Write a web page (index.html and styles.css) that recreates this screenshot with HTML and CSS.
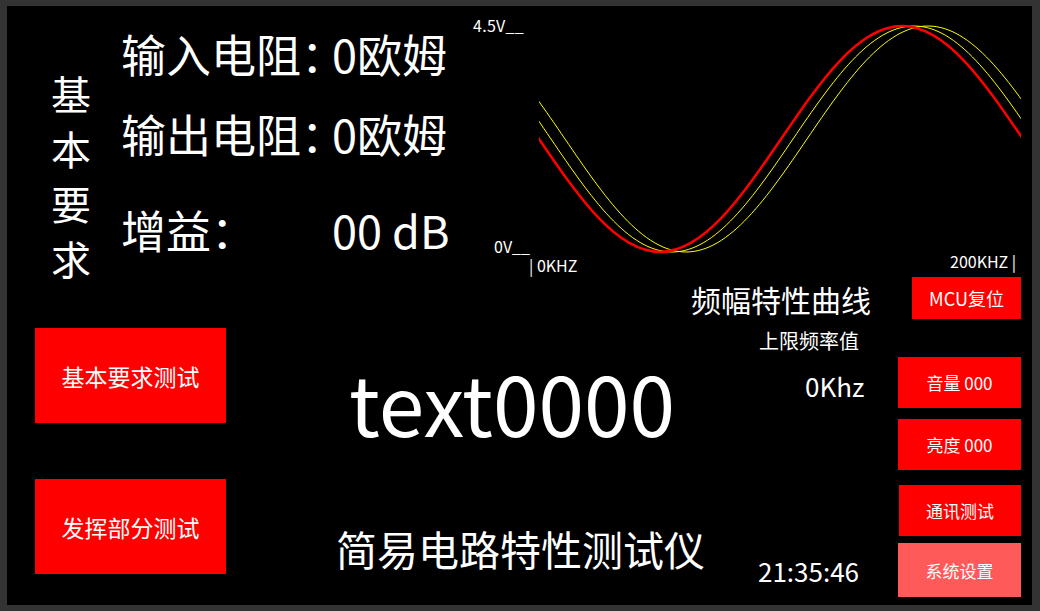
FILE: index.html
```html
<!DOCTYPE html>
<html lang="zh-CN">
<head>
<meta charset="utf-8">
<title>简易电路特性测试仪</title>
<link rel="stylesheet" href="styles.css">
</head>
<body>
<div class="screen">
  <div class="top">
    <div class="vert">基本要求</div>
    <div class="readings">
      <div class="row r1"><span class="label">输入电阻<span class="colon">：</span></span><span class="value">0欧姆</span></div>
      <div class="row r2"><span class="label">输出电阻<span class="colon">：</span></span><span class="value">0欧姆</span></div>
      <div class="row r3"><span class="label">增益<span class="colon">：</span></span><span class="value">00 dB</span></div>
    </div>
    <div class="chart">
      <span class="axis ymax">4.5V__</span>
      <span class="axis ymin">0V__</span>
      <span class="axis xmin">| 0KHZ</span>
      <span class="axis xmax">200KHZ |</span>
      <svg class="plot" width="482" height="269" viewBox="0 0 482 269">
        <defs>
          <path id="wave" d="M-121,20 C-77.21,20 -39.46,75.1 0,133 C39.46,190.9 77.21,246 121,246 C164.79,246 202.54,190.9 242,133 C281.46,75.1 319.21,20 363,20 C406.79,20 444.54,75.1 484,133"/>
        </defs>
        <use href="#wave" class="yl" transform="translate(26,0)"/>
        <use href="#wave" class="yl" transform="translate(12,0)"/>
        <use href="#wave" class="rd"/>
      </svg>
    </div>
  </div>
  <div class="bottom">
    <div class="col-a">
      <div class="btn big b1">基本要求测试</div>
      <div class="btn big b2">发挥部分测试</div>
    </div>
    <div class="col-b">
      <div class="bigtext">text0000</div>
      <div class="title">简易电路特性测试仪</div>
    </div>
    <div class="col-c">
      <div class="curve-title">频幅特性曲线</div>
      <div class="limit-label">上限频率值</div>
      <div class="limit-value">0Khz</div>
      <div class="clock">21:35:46</div>
    </div>
    <div class="col-d">
      <div class="btn small mcu">MCU复位</div>
      <div class="btn small vol">音量 000</div>
      <div class="btn small bright">亮度 000</div>
      <div class="btn small comm">通讯测试</div>
      <div class="btn small sys">系统设置</div>
    </div>
  </div>
</div>
</body>
</html>
```
FILE: styles.css
```css
html, body {
  margin: 0;
  padding: 0;
  background: #333333;
}
body {
  width: 1040px;
  height: 611px;
  overflow: hidden;
  font-family: "Noto Sans CJK SC", "Microsoft YaHei", sans-serif;
  color: #ffffff;
}
.screen {
  margin: 6px 8px 6px 7px;
  width: 1025px;
  height: 599px;
  background: #000000;
  display: flex;
  flex-direction: column;
}
.top {
  height: 269px;
  display: grid;
  grid-template-columns: 114px 349px 1fr;
}
.vert {
  padding-left: 44px;
  padding-top: 60px;
  width: 40px;
  font-size: 40px;
  line-height: 55px;
}
.readings {
  padding-top: 25px;
}
.row {
  display: grid;
  grid-template-columns: 211px auto;
  height: 45px;
  font-size: 45px;
  line-height: 45px;
  white-space: nowrap;
}
.colon {
  letter-spacing: -0.5em;
}
.r2 { margin-top: 35px; }
.r3 { margin-top: 51px; }
.chart {
  position: relative;
  height: 269px;
}
.axis {
  position: absolute;
  font-size: 16px;
  line-height: 16px;
  white-space: nowrap;
}
.ymax { left: 3px; top: 11px; letter-spacing: 0.3px; }
.ymin { left: 24px; top: 232px; }
.xmin { left: 59px; top: 251px; }
.xmax { left: 480px; top: 247px; }
.plot {
  position: absolute;
  left: 69px;
  top: 0;
  overflow: hidden;
}
.plot .rd {
  fill: none;
  stroke: #ff0000;
  stroke-width: 2.5;
}
.plot .yl {
  fill: none;
  stroke: #ffff00;
  stroke-width: 1;
}
.bottom {
  height: 330px;
  display: grid;
  grid-template-columns: 253px 420px 215px 137px;
}
.btn {
  background: #ff0000;
  color: #ffffff;
  display: flex;
  align-items: center;
  justify-content: center;
  white-space: nowrap;
}
.col-a {
  padding-left: 28px;
  display: flex;
  flex-direction: column;
}
.big {
  width: 191px;
  height: 95px;
  font-size: 23px;
}
.b1 { margin-top: 53px; }
.b2 { margin-top: 56px; }
.col-b {
  display: flex;
  flex-direction: column;
  white-space: nowrap;
}
.bigtext {
  margin-top: 86px;
  margin-left: 89px;
  font-size: 82px;
  line-height: 82px;
}
.title {
  margin-top: 85px;
  margin-left: 76px;
  font-size: 41px;
  line-height: 41px;
}
.col-c {
  display: flex;
  flex-direction: column;
  white-space: nowrap;
}
.curve-title {
  margin-top: 9px;
  margin-left: 11px;
  font-size: 30px;
  line-height: 30px;
}
.limit-label {
  margin-top: 17px;
  margin-left: 79px;
  font-size: 20px;
  line-height: 20px;
}
.limit-value {
  margin-top: 22px;
  margin-left: 125px;
  font-size: 26px;
  line-height: 26px;
}
.clock {
  margin-top: 159px;
  margin-left: 78px;
  font-size: 26px;
  line-height: 26px;
}
.col-d {
  display: flex;
  flex-direction: column;
  align-items: flex-end;
  padding-right: 11px;
}
.small {
  width: 123px;
  height: 51px;
  font-size: 17px;
}
.mcu { margin-top: 2px; width: 109px; height: 42px; font-size: 18px; }
.vol { margin-top: 38px; }
.bright { margin-top: 11px; }
.comm { margin-top: 15px; width: 122px; }
.sys { margin-top: 7px; height: 54px; background: #ff5a5a; }
```
